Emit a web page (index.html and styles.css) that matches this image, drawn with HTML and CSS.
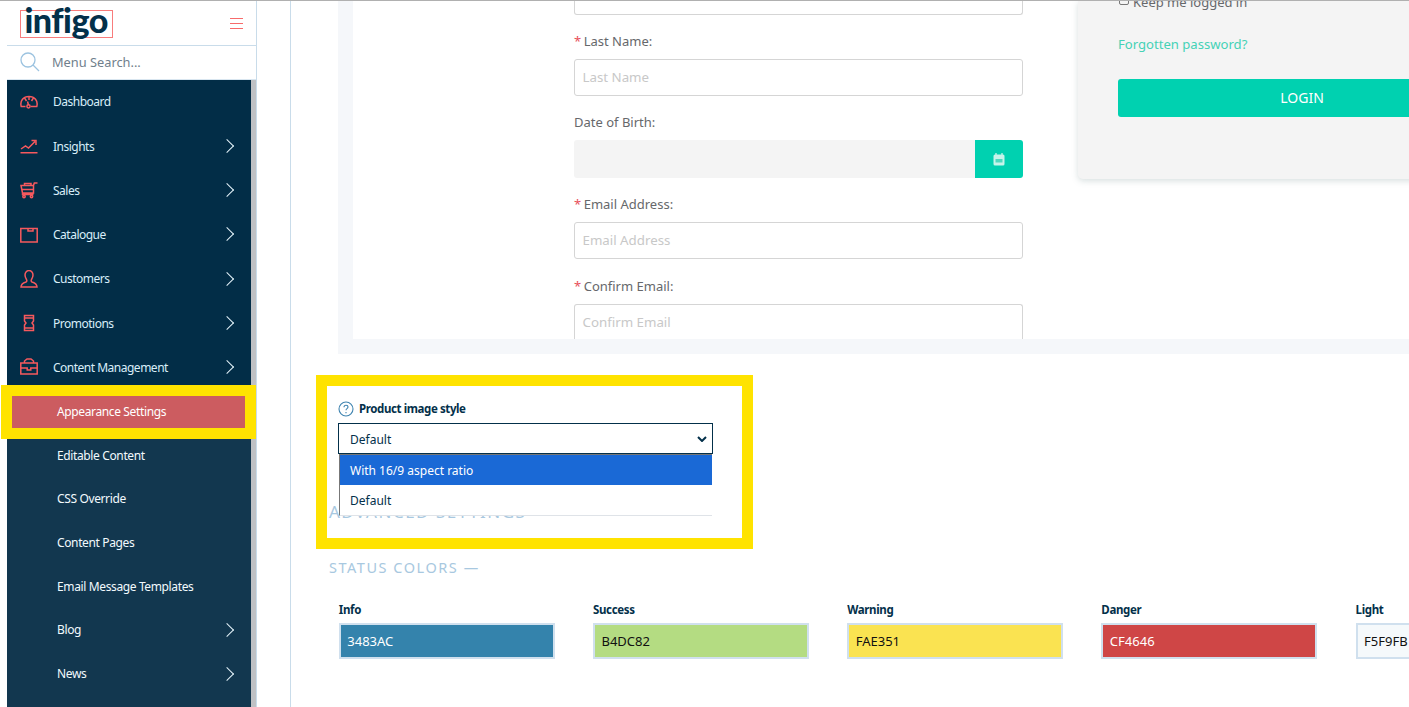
FILE: index.html
```html
<!DOCTYPE html>
<html lang="en">
<head>
<meta charset="utf-8">
<title>Infigo</title>
<link rel="stylesheet" href="styles.css">
</head>
<body>
<div class="app">
  <aside class="sidebar">
    <div class="brand">
      <span class="logo">infigo</span>
      <svg class="burger" viewBox="0 0 13 13"><path d="M0 1.500h13M0 6.500h13M0 11.500h13"/></svg>
    </div>
    <div class="search">
      <svg class="search-icon" viewBox="0 0 20 20"><circle cx="8" cy="8" r="7"/><path d="M13 13l6 6"/></svg>
      <span>Menu Search...</span>
    </div>
    <nav class="menu">
      <div class="menu-scroll">
        <a class="item"><svg class="ico" viewBox="0 0 18 18"><path d="M5.500 13.500H1.200C-.3 7.500 3.500 3.500 9 3.500s9.300 4 7.800 10h-6"/><path d="M4.500 4.800L6.500 8M9 3.500V7M13.500 4.800L11.500 8M7.500 8.500l1 3.500"/><circle cx="8.500" cy="13.300" r="1.600"/></svg>Dashboard</a>
        <a class="item more"><svg class="ico" viewBox="0 0 18 18"><path d="M1 12l4.500-3 3 2L15 4.500M11.500 3.500H16V8M.5 15.800h17"/></svg>Insights</a>
        <a class="item more"><svg class="ico" viewBox="0 0 18 18"><path d="M1 4.500h12.500V12H2.500zM2 8.500h11.500M13.500 4.500l.8-2.500h3.200M4.500 4.500V2.500h6.500v2M2.500 12v1.500h11"/><circle cx="4" cy="15.500" r="1.200"/><circle cx="11.500" cy="15.500" r="1.200"/></svg>Sales</a>
        <a class="item more"><svg class="ico" viewBox="0 0 18 18"><path d="M.8 16V2.500h16.400V16zM8 2.500V5h5V2.500"/></svg>Catalogue</a>
        <a class="item more"><svg class="ico" viewBox="0 0 18 18"><path d="M1 17c0-3 2-4 5-5 1-.5 1-1.500.5-2.500C5.500 8 5 6.500 5 5c0-2.500 2-4.500 4-4.500s4 2 4 4.500c0 1.500-.5 3-1.500 4.500-.5 1-.5 2 .5 2.500 3 1 5 2 5 5z"/></svg>Customers</a>
        <a class="item more"><svg class="ico" viewBox="0 0 18 18"><path d="M4.500 1.500h9V7L12 9l1.500 2v5.500h-9V11L6 9 4.500 7zM4.500 4h9M4.500 14h9"/></svg>Promotions</a>
        <a class="item more"><svg class="ico" viewBox="0 0 18 18"><path d="M.8 5h16.400v11H.8zM.8 10h6.400v2h3.600v-2h6.400M4.500 5V3l2.500-2h4l2.500 2v2"/></svg>Content Management</a>
        <a class="item sub active">Appearance Settings</a>
        <a class="item sub">Editable Content</a>
        <a class="item sub">CSS Override</a>
        <a class="item sub">Content Pages</a>
        <a class="item sub">Email Message Templates</a>
        <a class="item sub more">Blog</a>
        <a class="item sub more">News</a>
      </div>
    </nav>
  </aside>

  <main class="main">
    <div class="content">
      <section class="form-outer">
        <div class="form-inner">
          <div class="form-col">
            <div class="input clipped"></div>
            <label class="lbl"><i>*</i>Last Name:</label>
            <div class="input">Last Name</div>
            <label class="lbl">Date of Birth:</label>
            <div class="date"><span class="date-field"></span><span class="date-btn"><svg viewBox="0 0 12 13"><path class="cal-ring" d="M3 0v3M9 0v3"/><rect class="cal-body" x=".5" y="1.500" width="11" height="11" rx="1.500"/><path class="cal-grid" d="M2.500 6h7v3.500h-7z"/></svg></span></div>
            <label class="lbl"><i>*</i>Email Address:</label>
            <div class="input">Email Address</div>
            <label class="lbl lbl-wide"><i>*</i>Confirm Email:</label>
            <div class="input cut">Confirm Email</div>
          </div>
          <div class="login">
            <div class="keep"><span class="check"></span>Keep me logged in</div>
            <a class="forgot">Forgotten password?</a>
            <div class="login-btn">LOGIN</div>
          </div>
        </div>
      </section>

      <section class="style-block">
        <div class="style-label"><svg viewBox="0 0 16 16"><circle cx="8" cy="8" r="7"/><path d="M6 6.200c0-1.300 1-2 2-2s2 .7 2 1.900c0 1.600-2 1.500-2 3.100"/><path d="M8 11v1.200"/></svg><b>Product image style</b></div>
        <div class="select">Default<svg viewBox="0 0 10 6"><path d="M1 1l4 4 4-4"/></svg></div>
      </section>

      <h3 class="section-title advanced">ADVANCED SETTINGS</h3>
      <h3 class="section-title status">STATUS COLORS —</h3>

      <section class="swatches">
        <div class="swatch"><label>Info</label><div class="color c-info">3483AC</div></div>
        <div class="swatch"><label>Success</label><div class="color c-success">B4DC82</div></div>
        <div class="swatch"><label>Warning</label><div class="color c-warning">FAE351</div></div>
        <div class="swatch"><label>Danger</label><div class="color c-danger">CF4646</div></div>
        <div class="swatch"><label>Light</label><div class="color c-light">F5F9FB</div></div>
      </section>
    </div>
  </main>
</div>

<div class="options">
  <div class="option on">With 16/9 aspect ratio</div>
  <div class="option">Default</div>
</div>
<div class="mark mark-menu"></div>
<div class="mark mark-select"></div>
</body>
</html>
```
FILE: styles.css
```css
* { box-sizing: border-box; }
html, body { margin: 0; height: 100%; overflow: hidden; }
body { background: #fff; font-family: "Noto Sans", sans-serif; font-size: 12px; color: #03304a; position: relative; }
.app { display: flex; height: 707px; border-top: 1px solid #b0b0b0; padding-left: 7px; }

/* sidebar */
.sidebar { width: 250px; flex: none; display: flex; flex-direction: column; border-right: 1px solid #c9dcea; }
.brand { height: 45px; flex: none; display: flex; align-items: center; justify-content: space-between; padding: 0 13px; border-bottom: 1px solid #c9dcea; }
.logo { font-family: "Lato", sans-serif; font-weight: 900; font-size: 34px; line-height: 18px; height: 28px; letter-spacing: -.5px; color: #03304a; border: 1px solid #f87c7c; padding: 0 3.500px; display: block; margin-top: 2px; width: 93px; }
.burger { width: 13px; height: 13px; fill: none; stroke: #f76b6b; stroke-width: 1; }
.search { height: 34px; flex: none; display: flex; align-items: center; gap: 12px; padding: 0 0 2px 13px; border-bottom: 1px solid #d9e6f0; color: #70808c; font-size: 12.800px; }
.search-icon { width: 20px; height: 20px; fill: none; stroke: #9cc3e0; stroke-width: 1.300; }
.menu { flex: 1; display: flex; background: #bfc1c4; min-height: 0; overflow: hidden; }
.menu-scroll { width: 244px; background: linear-gradient(#022d47 0 305px, #12374f 305px); }
.item { display: flex; align-items: center; height: 44.250px; padding: 0 0 .5px 13px; color: #d9eef9; font-size: 12px; position: relative; letter-spacing: -.5px; }
.ico { width: 18px; height: 18px; margin-right: 15px; fill: none; stroke: #f6595e; stroke-width: 1.500; flex: none; }
.more::after { content: ""; position: absolute; left: 215px; top: 50%; width: 9px; height: 9px; margin-top: -5.500px; border-top: 1.600px solid #e6f4fb; border-right: 1.600px solid #e6f4fb; transform: rotate(45deg); }
.sub { padding: 0 0 1px 50px; color: #f2fafe; height: 43.700px; letter-spacing: -.37px; }
.active { color: #fff; background: #cc5c60; width: 233px; margin: 6px 0 5px 5px; padding: 0 0 2px 45px; height: 33px; }

/* main */
.main { flex: 1; min-width: 0; padding-left: 33px; overflow: hidden; }
.content { border-left: 1px solid #c9dcea; height: 100%; padding-left: 47px; width: 1200px; }
.form-outer { background: #f5f7fa; height: 353px; padding: 0 0 15px 15px; }
.form-inner { background: #fff; height: 338px; display: flex; padding-left: 221px; overflow: hidden; }
.form-col { width: 449px; flex: none; }
.input { height: 37px; border: 1px solid #d5d5d5; border-radius: 3px; background: #fff; padding-left: 7.500px; line-height: 35px; font-size: 13.300px; color: #c8c8c8; }
.clipped { height: 14px; border-top: 0; border-radius: 0 0 3px 3px; }
.cut { height: 40px; border-bottom: 0; }
.lbl { display: block; font-size: 13px; color: #66686b; line-height: 18px; margin: 17px 0 9px; }
.lbl-wide { margin-top: 18px; }
.lbl i { color: #e8505b; font-style: normal; margin-right: 2.500px; }
.date { display: flex; height: 38px; border-radius: 3px; overflow: hidden; }
.date-field { flex: 1; background: #f4f4f4; }
.date-btn { width: 48px; background: #00d1b0; display: flex; align-items: center; justify-content: center; }
.date-btn svg { width: 12px; height: 13px; }
.cal-ring { fill: none; stroke: #c6f4ea; stroke-width: 1.300; }
.cal-body { fill: #c6f4ea; }
.cal-grid { fill: #4fd9c0; }
.login { margin-left: 55px; width: 400px; height: 178px; background: #f4f4f4; border-radius: 0 0 0 5px; box-shadow: 0 2px 6px rgba(100,130,130,.25); padding: 0 0 0 40px; overflow: hidden; }
.keep { height: 2px; line-height: 0; font-size: 13px; color: #66686b; display: flex; align-items: center; gap: 4px; padding-left: 1px; }
.check { width: 10px; height: 14px; border: 1px solid #777; border-radius: 2px; margin-top: -8px; flex: none; }
.forgot { display: block; color: #45d2b6; font-size: 13.100px; line-height: 18px; margin-top: 32px; }
.login-btn { height: 38px; margin-top: 26px; background: #00d1b0; border-radius: 3px; color: #fff; font-size: 14px; line-height: 38px; text-align: center; width: 368px; }

.style-block { padding: 45px 0 0 0; height: 149px; }
.style-label { display: flex; align-items: center; gap: 5px; height: 18px; font-size: 11.500px; letter-spacing: -.4px; color: #03304a; }
.style-label svg { width: 16px; height: 16px; fill: none; stroke: #3f84b0; stroke-width: 1.100; margin-top: 1px; }
.style-label b { font-weight: 700; }
.select { width: 375px; height: 31px; margin-top: 6px; border: 1px solid #03304a; display: flex; align-items: center; justify-content: space-between; padding: 1px 5px 0 11px; color: #03304a; }
.select svg { width: 10px; height: 6px; fill: none; stroke: #03304a; stroke-width: 2; }

.section-title { margin: 0 0 0 -9px; font-weight: 400; font-size: 14.500px; line-height: 18px; letter-spacing: 1.530px; color: #a8c8e0; }
.advanced { font-size: 17px; letter-spacing: 1.500px; }
.status { margin-top: 37px; }

.swatches { display: flex; gap: 38.200px; margin-top: 26px; padding-left: .8px; }
.swatch { width: 216px; flex: none; }
.swatch label { display: block; font-size: 11.500px; letter-spacing: -.35px; font-weight: 700; line-height: 16px; color: #03304a; margin-bottom: 5px; }
.color { height: 36px; border: 2px solid #d0e0ee; line-height: 32px; padding-left: 6.500px; font-size: 13px; color: #111; }
.c-info { background: #3483ac; color: #fff; }
.c-success { background: #b4dc82; }
.c-warning { background: #fae351; }
.c-danger { background: #cf4646; color: #fff; }
.c-light { background: #f5f9fb; }

/* overlays */
.options { position: absolute; left: 339px; top: 454px; width: 373px; height: 62px; background: #fff; border-left: 1px solid #777; border-top: 1px solid #777; border-bottom: 1px solid #dfe3e8; }
.option { height: 30px; line-height: 30px; padding: 1px 0 0 10px; color: #03304a; }
.on { background: #1a69d6; color: #fff; }
.mark { position: absolute; border-style: solid; border-color: #ffe300; pointer-events: none; }
.mark-menu { left: 1px; top: 385px; width: 255px; height: 54px; border-width: 11px; }
.mark-select { left: 316px; top: 375px; width: 437px; height: 174px; border-width: 11px; }
```
